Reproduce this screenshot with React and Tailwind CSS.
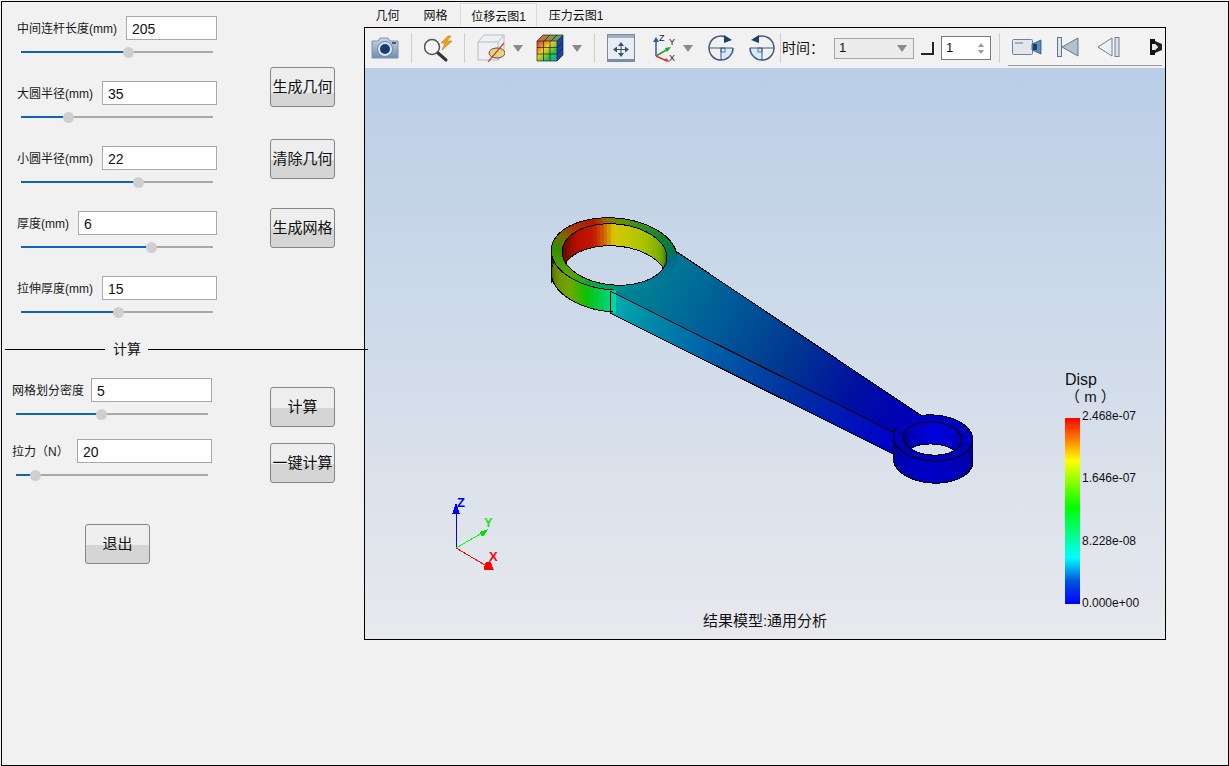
import React from "react";

const FONT = "font-['Liberation_Sans','Noto_Sans_CJK_SC',sans-serif]";

// colour helpers for the result plot
const hex = (c) => [1, 3, 5].map((i) => parseInt(c.slice(i, i + 2), 16));
const colorAt = (keys, t) => {
  for (let i = 0; i < keys.length - 1; i++) {
    const [a, ca] = keys[i];
    const [b, cb] = keys[i + 1];
    if (t >= a && t <= b) {
      const k = (t - a) / (b - a);
      const x = hex(ca);
      const y = hex(cb);
      return `rgb(${x.map((v, j) => Math.round(v + (y[j] - v) * k)).join(",")})`;
    }
  }
  return keys[keys.length - 1][1];
};

const pt = (e, deg, dy = 0) => {
  const t = (deg * Math.PI) / 180;
  const x = e.rx * Math.cos(t);
  const y = e.ry * Math.sin(t);
  return [e.cx + x * Math.cos(e.rot) - y * Math.sin(e.rot), e.cy + x * Math.sin(e.rot) + y * Math.cos(e.rot) + dy];
};
const fmt = (pts) => pts.map((p) => p.map((v) => v.toFixed(1)).join(",")).join(" ");
const arc = (e, from, to, dy = 0) => {
  const pts = [];
  for (let d = from; d <= to; d += 3) pts.push(pt(e, d, dy));
  return fmt(pts);
};

const Bands = ({ from, to, keys, a, b, dyA = 0, dyB = 0, step = 4 }) => {
  const items = [];
  for (let d = from; d < to; d += step) {
    const pts = [pt(a, d, dyA), pt(a, d + step, dyA), pt(b, d + step, dyB), pt(b, d, dyB)];
    const c = colorAt(keys, ((d % 360) + 360) % 360);
    items.push(<polygon key={d} points={fmt(pts)} fill={c} stroke={c} strokeWidth="1" />);
  }
  return <>{items}</>;
};

const bigOut = { cx: 614, cy: 254, rx: 63, ry: 36, rot: 0.08 };
const bigIn = { cx: 614.5, cy: 254.5, rx: 52.5, ry: 30.5, rot: 0.08 };
const smallOut = { cx: 933, cy: 438, rx: 40, ry: 23, rot: 0.06 };
const smallIn = { cx: 932.5, cy: 438.5, rx: 29.5, ry: 16.5, rot: 0.06 };
const H = 22;

const bigFace = [
  [0, "#006a90"], [40, "#007a98"], [75, "#008c98"], [90, "#00a070"], [112, "#10a830"], [135, "#60a400"], [160, "#489800"],
  [180, "#309000"], [205, "#806800"], [222, "#a83008"], [245, "#b01800"], [258, "#a06800"], [272, "#609400"],
  [295, "#309020"], [325, "#108030"], [345, "#007a50"], [360, "#006a90"],
];
const bigWall = [
  [0, "#306000"], [180, "#500800"], [200, "#740c00"], [220, "#b80c00"], [242, "#c01800"], [254, "#d06000"],
  [265, "#d8c800"], [300, "#a8c400"], [330, "#70a800"], [350, "#306800"], [360, "#306000"],
];
const bigSide = [
  [85, "#00d8a8"], [95, "#00d060"], [112, "#10c000"], [130, "#70a800"], [150, "#709000"], [170, "#406800"], [190, "#203800"],
];
const smallFace = [[0, "#0000b8"], [360, "#0000c0"]];
const smallWall = [[0, "#000090"], [180, "#000050"], [215, "#0000b0"], [270, "#0000e0"], [320, "#0000c0"], [360, "#000090"]];
const smallSide = [[0, "#000070"], [30, "#0000b0"], [90, "#0000c8"], [150, "#0000b0"], [190, "#000070"]];

const Model = () => (
  <svg className="absolute inset-0" width="800" height="571" viewBox="365 68 800 571" shapeRendering="crispEdges">
    <defs>
      <linearGradient id="canvasBg" gradientUnits="userSpaceOnUse" x1="0" y1="68" x2="0" y2="639">
        <stop offset="0" stopColor="#b9cee6" />
        <stop offset="1" stopColor="#e8e9ed" />
      </linearGradient>
      <linearGradient id="rodTop" gradientUnits="userSpaceOnUse" x1="640" y1="285" x2="900" y2="430">
        <stop offset="0" stopColor="#008094" />
        <stop offset="0.3" stopColor="#005a98" />
        <stop offset="0.55" stopColor="#003890" />
        <stop offset="0.8" stopColor="#0010a0" />
        <stop offset="1" stopColor="#0000b8" />
      </linearGradient>
      <linearGradient id="rodSide" gradientUnits="userSpaceOnUse" x1="610" y1="300" x2="893" y2="440">
        <stop offset="0" stopColor="#00b0b0" />
        <stop offset="0.15" stopColor="#0088a8" />
        <stop offset="0.35" stopColor="#0060a8" />
        <stop offset="0.65" stopColor="#0030a0" />
        <stop offset="1" stopColor="#0000c8" />
      </linearGradient>
      <clipPath id="bigHole">
        <polygon points={arc(bigIn, 0, 360)} />
      </clipPath>
      <clipPath id="smallHole">
        <polygon points={arc(smallIn, 0, 360)} />
      </clipPath>
    </defs>

    {/* connecting rod */}
    <polygon points="610,291 893,432 893,454 610,313" fill="url(#rodSide)" />
    <polygon points="677,252 922,416 945,445 893,432 610,291 640,270" fill="url(#rodTop)" />

    {/* big end */}
    <Bands from={86} to={194} keys={bigSide} a={bigOut} b={bigOut} dyB={H} />
    <Bands from={0} to={360} keys={bigFace} a={bigOut} b={bigIn} />
    <g clipPath="url(#bigHole)">
      <Bands from={0} to={360} keys={bigWall} a={bigIn} b={bigIn} dyB={H + 2} />
      <polygon points={arc(bigIn, 0, 360, H)} fill="url(#canvasBg)" stroke="#000" />
    </g>
    <g fill="none" stroke="#000">
      <polygon points={arc(bigIn, 0, 360)} />
      <polyline points={arc(bigOut, 88, 352)} />
      <polyline points={arc(bigOut, 88, 192, H)} />
      <polyline points="551,256 551,283" />
      <polyline points="610,291 610,313" />
    </g>

    {/* small end */}
    <Bands from={-12} to={194} keys={smallSide} a={smallOut} b={smallOut} dyB={H} />
    <Bands from={0} to={360} keys={smallFace} a={smallOut} b={smallIn} />
    <g clipPath="url(#smallHole)">
      <Bands from={0} to={360} keys={smallWall} a={smallIn} b={smallIn} dyB={H + 2} />
      <polygon points={arc(smallIn, 0, 360, H)} fill="url(#canvasBg)" stroke="#000" />
    </g>
    <g fill="none" stroke="#000">
      <polygon points={arc(smallIn, 0, 360)} />
      <polyline points={arc(smallOut, 255, 565)} />
      <polyline points={arc(smallOut, -12, 192, H)} />
      <polyline points="677,252 922,416" />
      <polyline points="610,291 893,432" />
      <polyline points="610,313 893,454" />
    </g>

    {/* axes triad */}
    <g strokeWidth="1">
      <line x1="456" y1="548" x2="456" y2="512" stroke="#0000ff" />
      <polygon points="456,503 452,514 460,514" fill="#0000ff" />
      <line x1="456" y1="548" x2="482" y2="533" stroke="#00ff00" />
      <polygon points="480,532 488,529 484,536 481,536" fill="#00e000" />
      <line x1="456" y1="548" x2="485" y2="565" stroke="#ff0000" />
      <polygon points="485,563 490,561 494,570 484,570" fill="#ff0000" />
    </g>
    <g className={FONT} fontSize="13" fontWeight="700" shapeRendering="auto">
      <text x="457" y="507" fill="#0000e0">Z</text>
      <text x="484" y="527" fill="#20e020">Y</text>
      <text x="489" y="561" fill="#ff0000">X</text>
    </g>
  </svg>
);

const Slider = ({ thumb }) => (
  <div className="relative ml-[4px] h-[11px] w-[192px]">
    <div className="absolute left-0 right-0 top-[4px] h-[2px] bg-[#a9a9a9]" />
    <div className="absolute left-0 top-[4px] h-[2px] bg-[#0b66b8]" style={{ width: thumb }} />
    <div className="absolute top-0 h-[11px] w-[11px] rounded-full bg-[#cfcfcf]" style={{ left: thumb - 5 }} />
  </div>
);

const Field = ({ label, value, width, thumb, gap }) => (
  <div className={gap}>
    <div className="flex h-6 items-center justify-between">
      <span className="whitespace-nowrap pt-[2px] text-xs text-[#1a1a1a]">{label}</span>
      <input
        readOnly
        value={value}
        style={{ width }}
        className={`${FONT} h-6 border border-[#a8a8a8] bg-white pl-[5px] pt-px text-sm text-[#111] outline-none`}
      />
    </div>
    <div className="mt-[7px]">
      <Slider thumb={thumb} />
    </div>
  </div>
);

const Btn = ({ children, className }) => (
  <button className={`h-10 w-[65px] whitespace-nowrap rounded-[3px] border border-[#858585] pb-[2px] text-[15px] leading-none text-[#111] ${className}`}>
    {children}
  </button>
);
const SPLIT = "bg-[linear-gradient(#eeeeee_52%,#d5d5d5_52%)]";

const Sep = () => <div className="h-[30px] w-px bg-[#cfcfcf]" />;

const DropArrow = ({ className }) => (
  <svg width="10" height="7" viewBox="0 0 10 7" className={className}>
    <polygon points="0,0 10,0 5,7" fill="#8a8a8a" />
  </svg>
);

const CameraIcon = () => (
  <svg width="28" height="24" viewBox="0 0 28 24">
    <defs>
      <linearGradient id="camBody" x1="0" y1="0" x2="0" y2="1">
        <stop offset="0" stopColor="#c9d6e6" />
        <stop offset="1" stopColor="#6f8eb2" />
      </linearGradient>
    </defs>
    <path d="M1 5h6l2-3h8l2 3h8v17H1z" fill="url(#camBody)" stroke="#7d93ad" />
    <rect x="21" y="6" width="4" height="2" fill="#3d5a80" />
    <circle cx="14" cy="13" r="7.5" fill="#dbe6f2" stroke="#6d88a8" />
    <circle cx="14" cy="13" r="5" fill="#1d3a78" />
  </svg>
);

const SearchIcon = () => (
  <svg width="32" height="30" viewBox="0 0 32 30">
    <circle cx="8" cy="14" r="7.5" fill="#f4f6f8" stroke="#555" strokeWidth="1.5" />
    <line x1="14" y1="20" x2="22" y2="27" stroke="#333" strokeWidth="3" strokeLinecap="round" />
    <path d="M24 3l-7 7h4l-3 7 10-9h-5l4-5z" fill="#f0a020" stroke="#c87808" strokeWidth="0.6" />
  </svg>
);

const BoxIcon = () => (
  <svg width="28" height="28" viewBox="0 0 28 28">
    <path d="M1 8l6-7h20v17l-6 8H1z" fill="#eef0f3" stroke="#b7bcc4" />
    <path d="M1 8h20v18M21 8l6-7" fill="none" stroke="#b7bcc4" />
    <ellipse cx="20" cy="19" rx="8" ry="5" fill="#e9d27a" stroke="#555" />
    <line x1="11" y1="28" x2="27" y2="9" stroke="#c0492c" strokeWidth="1.2" />
  </svg>
);

const CubeIcon = () => (
  <svg width="28" height="28" viewBox="0 0 28 28">
    <defs>
      <linearGradient id="cubeFront" x1="0" y1="0" x2="1" y2="1">
        <stop offset="0" stopColor="#e03020" />
        <stop offset="0.4" stopColor="#f0d020" />
        <stop offset="0.7" stopColor="#30c040" />
        <stop offset="1" stopColor="#20a0d0" />
      </linearGradient>
      <linearGradient id="cubeTop" x1="0" y1="0" x2="1" y2="0">
        <stop offset="0" stopColor="#f06030" />
        <stop offset="1" stopColor="#40b060" />
      </linearGradient>
    </defs>
    <polygon points="1,7 7,1 27,1 21,7" fill="url(#cubeTop)" />
    <polygon points="21,7 27,1 27,21 21,27" fill="#1c3fa8" />
    <rect x="1" y="7" width="20" height="20" fill="url(#cubeFront)" />
    <path d="M1 13.5h20M1 20h20M7.5 7v20M14 7v20M21 7v20M1 7h20M1 27h20M1 7v20M7 1l-6 6M14 1l-6 6M21 1l-6 6M27 1l-6 6M7 1h20M27 1v20l-6 6M27 8l-6 6M27 14l-6 6" fill="none" stroke="#123" strokeWidth="0.7" />
  </svg>
);

const MoveIcon = () => (
  <svg width="28" height="28" viewBox="0 0 28 28">
    <rect x="0.5" y="0.5" width="27" height="27" fill="#e8edf3" stroke="#7a8a9c" />
    <rect x="1" y="1" width="26" height="3" fill="#9dafc4" />
    <rect x="1" y="25" width="26" height="2" fill="#7d8ea3" />
    <g fill="#3a5068">
      <polygon points="14,8 11,12 17,12" />
      <polygon points="14,23 11,19 17,19" />
      <polygon points="6,15.5 10,12.5 10,18.5" />
      <polygon points="22,15.5 18,12.5 18,18.5" />
    </g>
    <path d="M14 11v9M9 15.5h10" stroke="#3a5068" />
  </svg>
);

const AxesIcon = () => (
  <svg width="29" height="28" viewBox="0 0 29 28">
    <path d="M5 22V6" stroke="#2858b0" strokeWidth="1.5" />
    <polygon points="5,3 2,8 8,8" fill="#2858b0" />
    <path d="M5 22L17 15" stroke="#2a9a3a" strokeWidth="1.5" />
    <polygon points="20,13 14,14 16,18" fill="#2a9a3a" />
    <path d="M5 22L16 27" stroke="#d83a3a" strokeWidth="1.5" />
    <polygon points="19,28 13,27 15,24" fill="#d83a3a" />
    <g fontSize="9" fill="#222" className={FONT}>
      <text x="8" y="7">Z</text>
      <text x="18" y="11">Y</text>
      <text x="18" y="27">X</text>
    </g>
  </svg>
);

const RotateIcon = ({ flip }) => (
  <svg width="26" height="26" viewBox="0 0 26 26" className={flip ? "-scale-x-100" : ""}>
    <path d="M13 13h12a12 12 0 0 1-12 12z" fill="#d9e9f7" />
    <path d="M17 1.7A12 12 0 1 0 25 13" fill="none" stroke="#3a5a80" strokeWidth="1.5" />
    <path d="M1 13h24M13 13v12" stroke="#3a5a80" />
    <rect x="13" y="13" width="4" height="4" fill="none" stroke="#3a5a80" strokeWidth="0.8" />
    <polygon points="16,0 24,5 16,8" fill="#1f3f68" />
  </svg>
);

const MovieIcon = () => (
  <svg width="30" height="16" viewBox="0 0 30 16">
    <rect x="0.5" y="0.5" width="20" height="15" rx="1" fill="#e3e7ec" stroke="#6f8296" />
    <rect x="3" y="3" width="8" height="2" fill="#9fb0c2" />
    <polygon points="20,5 29,1 29,15 20,11" fill="#5c8fb8" stroke="#35506c" strokeWidth="0.8" />
    <rect x="21" y="5" width="4" height="6" fill="#1f3f68" />
  </svg>
);

const StepBackIcon = () => (
  <svg width="22" height="20" viewBox="0 0 22 20">
    <rect x="0.5" y="0.5" width="4" height="19" fill="#dfe4ea" stroke="#63778c" />
    <polygon points="21,1 21,19 5,10" fill="#b4c0cc" stroke="#63778c" />
  </svg>
);

const ReverseIcon = () => (
  <svg width="23" height="20" viewBox="0 0 23 20">
    <polygon points="15,1 15,19 1,10" fill="#eef1f4" stroke="#6d8196" />
    <rect x="18" y="0.5" width="4" height="19" fill="#dfe4ea" stroke="#6d8196" />
  </svg>
);

const ClippedIcon = () => (
  <svg width="12" height="18" viewBox="0 0 12 18">
    <path d="M0 1h5v5H2v6h3v5H0z" fill="#111" />
    <path d="M5 3l7 3v6l-7 3v-3l3-3-3-3z" fill="#222" />
    <path d="M2 6h3l3 3-3 3H2z" fill="#e8e8e8" />
  </svg>
);

const Toolbar = () => (
  <div className="flex h-10 shrink-0 items-center bg-[#f1f1f1]">
    <div className="ml-[6px]"><CameraIcon /></div>
    <div className="ml-[12px]"><Sep /></div>
    <div className="ml-[12px]"><SearchIcon /></div>
    <div className="ml-[8px]"><Sep /></div>
    <div className="ml-[12px]"><BoxIcon /></div>
    <DropArrow className="ml-[8px]" />
    <div className="ml-[13px]"><CubeIcon /></div>
    <DropArrow className="ml-[8px] mr-[1px]" />
    <div className="ml-[11px]"><Sep /></div>
    <div className="ml-[12px]"><MoveIcon /></div>
    <div className="ml-[16px]"><AxesIcon /></div>
    <DropArrow className="ml-[3px]" />
    <div className="ml-[15px]"><RotateIcon /></div>
    <div className="ml-[15px]"><RotateIcon flip /></div>
    <div className="ml-[5px]"><Sep /></div>
    <div className="ml-[1px] w-[52px] text-sm text-[#111]">时间：</div>
    <div className="flex h-[21px] w-20 items-center justify-between border border-[#a6a6a6] bg-[#ececec] pl-[4px] pr-[6px]">
      <span className={`${FONT} text-[13px] text-[#111]`}>1</span>
      <DropArrow />
    </div>
    <div className="ml-[7px] h-[13px] w-[13px] border-b-2 border-r-2 border-[#222]" />
    <div className="ml-[7px] flex h-6 w-[50px] items-center justify-between border border-[#7a7a7a] bg-white pl-[4px] pr-[6px]">
      <span className={`${FONT} text-[13px] text-[#111]`}>1</span>
      <div className="flex flex-col gap-[3px]">
        <div className="h-0 w-0 border-x-[3px] border-b-[4px] border-x-transparent border-b-[#999]" />
        <div className="h-0 w-0 border-x-[3px] border-t-[4px] border-x-transparent border-t-[#999]" />
      </div>
    </div>
    <div className="ml-[8px]"><Sep /></div>
    <div className="mb-[1px] ml-[8px] flex h-[37px] w-[154px] items-center border-b border-[#9a9a9a] bg-[#f3f3f3]">
      <div className="ml-[4px]"><MovieIcon /></div>
      <div className="ml-[15px]"><StepBackIcon /></div>
      <div className="ml-[18px]"><ReverseIcon /></div>
      <div className="ml-[30px]"><ClippedIcon /></div>
    </div>
  </div>
);

const Legend = () => (
  <div className={`${FONT} absolute left-[700px] top-[303px] text-[#111]`}>
    <div className="text-base leading-[17px]">Disp</div>
    <div className="text-[15px] leading-[17px]">（ m ）</div>
    <div className="mt-[13px] flex">
      <div className="h-[186px] w-[15px] bg-[linear-gradient(#ff0000,#ffff00_23%,#00ff00_48%,#00ffff_75%,#0050e0_88%,#0000ff)]" />
      <div className="-mt-[11px] ml-[2px] flex h-[205px] flex-col justify-between text-xs leading-[18px]">
        <span>2.468e-07</span>
        <span>1.646e-07</span>
        <span>8.228e-08</span>
        <span>0.000e+00</span>
      </div>
    </div>
  </div>
);

const App = () => (
  <div className={`${FONT} h-[766px] w-[1229px] overflow-hidden bg-[#f1f1f1] pl-px pt-px`}>
    <div className="flex h-full w-full border border-black">
      {/* Left panel */}
      <div className="relative z-10 w-[362px] shrink-0">
        <div className="flex pt-[14px]">
          <div className="w-[215px] pl-[15px]">
            <Field label="中间连杆长度(mm)" value="205" width={91} thumb={107} gap="mb-[23px]" />
            <Field label="大圆半径(mm)" value="35" width={115} thumb={47} gap="mb-[23px]" />
            <Field label="小圆半径(mm)" value="22" width={115} thumb={117} gap="mb-[23px]" />
            <Field label="厚度(mm)" value="6" width={139} thumb={130} gap="mb-[23px]" />
            <Field label="拉伸厚度(mm)" value="15" width={115} thumb={97} />
          </div>
          <div className="ml-[53px] flex flex-col pt-[51px]">
            <Btn className="bg-[linear-gradient(#eeeeee_65%,#d5d5d5_65%)]">生成几何</Btn>
            <Btn className={`mt-[32px] ${SPLIT}`}>清除几何</Btn>
            <Btn className={`mt-[29px] ${SPLIT}`}>生成网格</Btn>
          </div>
        </div>

        <div className="mt-[21px] flex h-5 items-center pl-[3px]">
          <div className="h-px w-[100px] shrink-0 bg-black" />
          <span className="ml-[8px] shrink-0 whitespace-nowrap text-sm text-[#111]">计算</span>
          <div className="ml-[7px] h-px w-[220px] shrink-0 bg-black" />
        </div>

        <div className="mt-[19px] flex">
          <div className="w-[210px] pl-[10px]">
            <Field label="网格划分密度" value="5" width={121} thumb={85} gap="mb-[19px]" />
            <Field label="拉力（N）" value="20" width={135} thumb={19} />
          </div>
          <div className="ml-[58px] flex flex-col pt-[9px]">
            <Btn className={SPLIT}>计算</Btn>
            <Btn className={`mt-[16px] ${SPLIT}`}>一键计算</Btn>
          </div>
        </div>

        <div className="ml-[83px] mt-[41px]">
          <Btn className={SPLIT}>退出</Btn>
        </div>
      </div>

      {/* Right panel */}
      <div className="flex w-[802px] shrink-0 flex-col">
        <div className="flex h-[25px] items-end text-xs text-[#111]">
          <div className="flex h-6 w-[47px] items-center justify-center pt-[2px]">几何</div>
          <div className="flex h-6 w-[49px] items-center justify-center pt-[2px]">网格</div>
          <div className="flex h-6 w-[77px] items-center justify-center border-x border-t border-[#d9d9d9] bg-[#f3f3f3] pt-[2px]">位移云图1</div>
          <div className="flex h-6 w-[78px] items-center justify-center pt-[2px]">压力云图1</div>
        </div>
        <div className="flex h-[613px] flex-col border border-black">
          <Toolbar />
          <div className="relative flex-1 bg-[linear-gradient(#b9cee6,#e8e9ed)]">
            <Model />
            <Legend />
            <div className="absolute bottom-[7px] left-0 right-0 text-center text-[15px] text-[#111]">结果模型:通用分析</div>
          </div>
        </div>
      </div>
    </div>
  </div>
);

export default App;
